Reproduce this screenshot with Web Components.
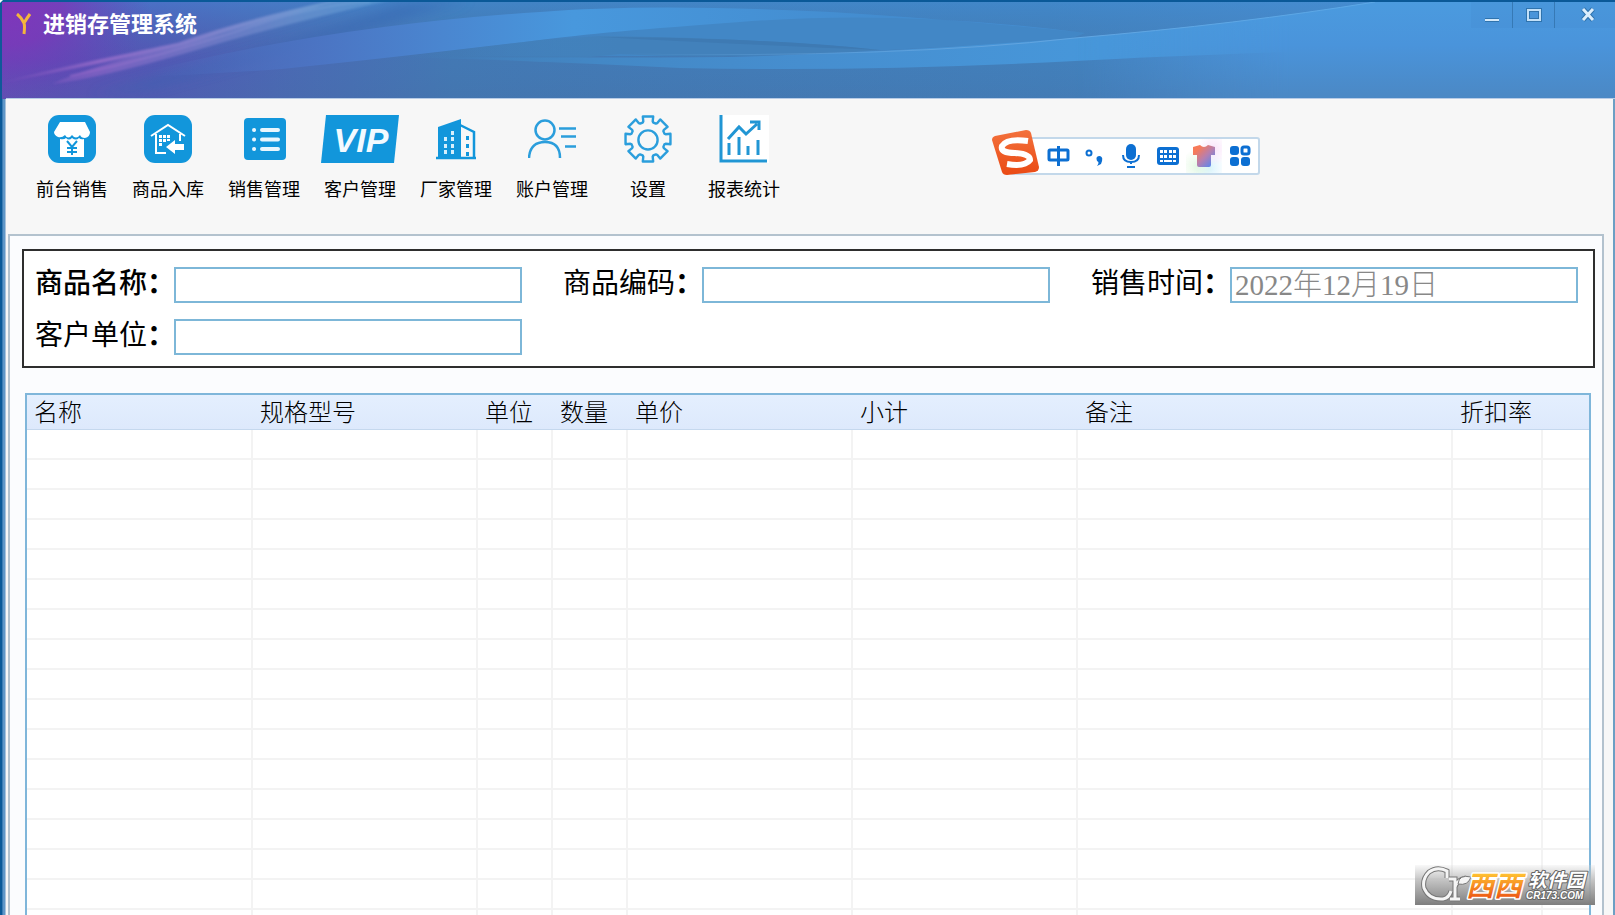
<!DOCTYPE html>
<html lang="zh-CN">
<head>
<meta charset="utf-8">
<title>进销存管理系统</title>
<style>
html,body{height:100%;margin:0}
body{font-family:"Liberation Sans","Noto Sans CJK SC",sans-serif;overflow:hidden;background:#f7f7f7}
</style>
</head>
<body>
<app-window>
  <title-bar slot="title">进销存管理系统</title-bar>
  <tool-bar slot="tools">
    <tool-item icon="shop">前台销售</tool-item>
    <tool-item icon="stock">商品入库</tool-item>
    <tool-item icon="list">销售管理</tool-item>
    <tool-item icon="vip">客户管理</tool-item>
    <tool-item icon="factory">厂家管理</tool-item>
    <tool-item icon="account">账户管理</tool-item>
    <tool-item icon="gear">设置</tool-item>
    <tool-item icon="chart">报表统计</tool-item>
  </tool-bar>
  <sale-form>
    <form-field label="商品名称" weight="500"></form-field>
    <form-field label="商品编码" weight="400"></form-field>
    <form-field label="销售时间" weight="400" value="2022年12月19日"></form-field>
    <form-field label="客户单位" weight="400"></form-field>
  </sale-form>
  <sale-table></sale-table>
  <ime-bar slot="overlay"></ime-bar>
  <site-mark slot="overlay"></site-mark>
</app-window>
<script>
const define = (name, html) => customElements.define(name, class extends HTMLElement {
  constructor(){
    super();
    this.attachShadow({mode:"open"}).innerHTML = typeof html === "function" ? html(this) : html;
  }
});

define("app-window", `
<style>
:host{display:flex;flex-direction:column;height:100vh;position:relative;overflow:hidden;box-sizing:border-box}
.frame{flex:1;min-height:0;display:flex;flex-direction:column;
 border-right:2px solid #6c9fc4;padding:0 9px 0 8px;
 background:linear-gradient(90deg,#0a5998 0 2px,#3b7cb4 2px 3px,#5f97c8 3px 5px,#a9c3dc 5px 6px,#f7f7f7 6px)}
.panel{flex:1;min-height:0;border:2px solid #b3c2ce;border-bottom:0;background:#fbfcfe;padding:13px 7px 0 12px;overflow:hidden}
</style>
<slot name="title"></slot>
<div class="frame"><slot name="tools"></slot><main class="panel"><slot></slot></main></div>
<slot name="overlay"></slot>`);

define("title-bar", `
<style>
:host{display:flex;flex:none;height:99px;position:relative;color:#fff;overflow:hidden}
.art{position:absolute;inset:0;width:100%;height:100%}
h1{position:relative;display:flex;align-items:flex-start;gap:11px;margin:0;padding:11px 0 0 16px;font-size:22px;line-height:28px;font-weight:700;flex:1}
h1 svg{margin-top:2px}
.buttons{position:relative;display:flex;height:28px;padding-top:2px;box-sizing:border-box}
button{width:42px;padding:0;border:0;border-right:1px solid #3679b5;background:#4189cb33;display:flex;justify-content:center;align-items:flex-start}
button:last-child{width:60px;border-right:0;padding-left:6px}
button svg{display:block;margin-top:3px}
</style>
<svg class="art" viewBox="0 0 1615 99" preserveAspectRatio="none" aria-hidden="true">
<defs>
<linearGradient id="base"><stop offset="0" stop-color="#6d41b8"/><stop offset=".035" stop-color="#6146b6"/><stop offset=".1" stop-color="#5355b5"/><stop offset=".18" stop-color="#4b68b4"/><stop offset=".28" stop-color="#4378b4"/><stop offset=".65" stop-color="#4280bc"/><stop offset=".8" stop-color="#4888c8"/><stop offset="1" stop-color="#4a8fd2"/></linearGradient>
<linearGradient id="down" x2="0" y2="1"><stop offset="0" stop-color="#4190d8" stop-opacity=".5"/><stop offset=".6" stop-color="#4278ae" stop-opacity=".1"/><stop offset="1" stop-color="#456fa4" stop-opacity=".3"/></linearGradient>
<radialGradient id="corner" gradientUnits="userSpaceOnUse" cx="0" cy="0" r="150" gradientTransform="matrix(1 0 0 .6 0 10)"><stop offset="0" stop-color="#8035bb"/><stop offset=".4" stop-color="#7a38b9" stop-opacity=".85"/><stop offset="1" stop-color="#6046b8" stop-opacity="0"/></radialGradient>
<linearGradient id="a" gradientUnits="userSpaceOnUse" x1="150" x2="880"><stop offset="0" stop-color="#4f6cc0" stop-opacity="0"/><stop offset=".22" stop-color="#4c74c4" stop-opacity=".9"/><stop offset=".4" stop-color="#4a86d0"/><stop offset=".58" stop-color="#4898dd"/><stop offset="1" stop-color="#438ccf"/></linearGradient>
<linearGradient id="c" gradientUnits="userSpaceOnUse" x1="400" x2="620"><stop offset="0" stop-color="#4281bb" stop-opacity="0"/><stop offset="1" stop-color="#4281bb"/></linearGradient>
<linearGradient id="lens" gradientUnits="userSpaceOnUse" x1="460" x2="640"><stop offset="0" stop-color="#4287c6" stop-opacity="0"/><stop offset="1" stop-color="#4287c6"/></linearGradient>
<linearGradient id="d" gradientUnits="userSpaceOnUse" x1="400" x2="1400"><stop offset="0" stop-color="#4382be" stop-opacity="0"/><stop offset=".2" stop-color="#4388c6"/><stop offset=".4" stop-color="#468ecf"/><stop offset=".7" stop-color="#4797da"/><stop offset="1" stop-color="#4b9add"/></linearGradient>
<linearGradient id="r" gradientUnits="userSpaceOnUse" x1="0" x2="0" y1="0" y2="99"><stop offset="0" stop-color="#4b9bdf"/><stop offset=".45" stop-color="#4a94db"/><stop offset="1" stop-color="#4b88c4"/></linearGradient>
<linearGradient id="fade" gradientUnits="userSpaceOnUse" x1="1075" x2="1290"><stop offset="0" stop-color="#fff" stop-opacity="0"/><stop offset="1" stop-color="#fff"/></linearGradient>
<mask id="m" maskUnits="userSpaceOnUse" x="1000" y="0" width="615" height="99"><rect x="1000" width="615" height="99" fill="url(#fade)"/></mask>
<linearGradient id="s" gradientUnits="userSpaceOnUse" x1="0" x2="390"><stop offset="0" stop-color="#8858bf" stop-opacity=".2"/><stop offset=".25" stop-color="#8c66c6"/><stop offset=".55" stop-color="#7b82cb"/><stop offset=".8" stop-color="#6d99d2"/><stop offset="1" stop-color="#5a9bd6"/></linearGradient>
<linearGradient id="l" gradientUnits="userSpaceOnUse" x1="620" x2="1375"><stop offset="0" stop-color="#68a5dc" stop-opacity="0"/><stop offset=".5" stop-color="#62a4df"/><stop offset="1" stop-color="#5ba7e6"/></linearGradient>
<filter id="b1"><feGaussianBlur stdDeviation="1"/></filter>
<filter id="b2"><feGaussianBlur stdDeviation="6"/></filter>
</defs>
<rect width="1615" height="99" fill="url(#base)"/><rect width="1615" height="99" fill="url(#down)"/>
<rect width="200" height="99" fill="url(#corner)"/>
<path d="M90 95Q280 50 400 5L470 0Q360 30 150 88Z" fill="#3565b0" opacity=".55" filter="url(#b2)"/>
<path d="M460 18Q650 3 830 12Q960 20 1085 33L1070 39Q900 51 740 56H460Z" fill="url(#lens)"/>
<path d="M120 78Q320 26 540 12Q650 3 830 12Q960 20 1085 33Q900 9 740 22Q600 32 540 40Q400 57 282 69Q200 75 120 78Z" fill="url(#a)"/>
<path d="M400 57L540 40L600 36Q760 38 880 50Q730 60 620 54L540 62Q460 56 400 57Z" fill="url(#c)"/>
<path d="M600 37Q770 38 880 50Q750 45 600 37Z" fill="#3e7ab3"/>
<path d="M400 57Q600 58 730 57Q900 52 1075 38Q1240 24 1375 2H1615V42Q1240 52 1075 61Q870 72 680 68Q540 61 400 57Z" fill="url(#d)"/>
<path d="M1000 38H1615V99H1000Z" fill="url(#r)" mask="url(#m)"/>
<path d="M1075 38Q1240 24 1375 2H1615V38Z" fill="url(#r)" mask="url(#m)"/>
<path d="M620 54Q900 58 1075 38Q1240 24 1375 2" fill="none" stroke="url(#l)"/>
<g filter="url(#b1)"><path d="M0 83Q48 70 120 55T180 42Q241 20 335 0H345Q260 21 185 45Q120 60 0 83Z" fill="url(#s)"/>
<path d="M52 84Q90 66 172 47Q250 28 345 0H392Q290 22 190 52Q100 78 52 84Z" fill="url(#s)" opacity=".65"/>
<path d="M70 76Q160 57 240 30T370 2" fill="none" stroke="url(#s)" stroke-width="2"/></g>
<path d="M0 1H1615" stroke="#0a5998" stroke-width="2"/><path d="M1 0V99" stroke="#0f5999" stroke-width="2"/><path d="M6 98.500H1615" stroke="#b8cce6"/>
<path d="M0 0H3L0 3Z" fill="#fff"/>
</svg>
<h1><svg width="16" height="22" viewBox="0 0 16 22" fill="none" stroke="#f4b63c" stroke-width="3"><path d="M1 1Q5 4 8 10Q9 13 8 21M14 1Q11 5 8 10"/></svg><slot></slot></h1>
<div class="buttons">
<button aria-label="最小化"><svg width="16" height="18" viewBox="0 0 16 18"><path d="M1 15H15" stroke="#2f73ad" stroke-width="4"/><path d="M1 15H15" stroke="#d3e9fa" stroke-width="2"/></svg></button>
<button aria-label="最大化"><svg width="18" height="18" viewBox="0 0 18 18" fill="none"><path d="M3 5H15V15H3Z" stroke="#2f73ad" stroke-width="4"/><path d="M3 5H15V15H3Z" stroke="#c2e0f8" stroke-width="2"/></svg></button>
<button aria-label="关闭"><svg width="18" height="18" viewBox="0 0 18 18" fill="none"><path d="M4 4L14 15M14 4L4 15" stroke="#2f73ad" stroke-width="5"/><path d="M4 4L14 15M14 4L4 15" stroke="#dceefc" stroke-width="3"/></svg></button>
</div>`);

define("tool-bar", `
<style>:host{display:flex;height:135px;padding:16px 0 0 16px;box-sizing:border-box;flex:none}</style><slot></slot>`);

const gearPath = (() => {
  let d = "";
  for (let i = 0; i < 8; i++) {
    const c = i * 45;
    [[-18,18],[-15,19],[-13,24],[13,24],[15,19],[18,18]].forEach(([a, r]) => {
      const t = (c + a - 90) * Math.PI / 180;
      d += (d ? "L" : "M") + (24 + r * Math.cos(t)).toFixed(1) + " " + (24 + r * Math.sin(t)).toFixed(1);
    });
  }
  return d + "Z";
})();
const icons = {
shop:`<svg width="48" height="48" viewBox="0 0 48 48"><rect width="48" height="48" rx="11" fill="#1296db"/><path d="M12 7H37L42 17Q42 22 37 23Q33 23 32 20Q28 25 24 20Q20 25 17 20Q14 23 10 22Q6 20 6 17Z" fill="#fff"/><path d="M12 24Q16 25 18 23Q21 26 24 23Q28 26 31 23Q33 25 36 24V42H12Z" fill="#fff"/><path d="M19 26L24 32L29 26M24 32V40M19 33H29M19 37H29" fill="none" stroke="#1296db" stroke-width="2"/></svg>`,
stock:`<svg width="48" height="48" viewBox="0 0 48 48"><rect width="48" height="48" rx="11" fill="#1296db"/><path d="M7 21L24 10L41 21M12 19V38H22M36 19V26" fill="none" stroke="#fff" stroke-width="2"/><path d="M15 20h3v3h-3zm4 0h3v3h-3zm4 0h3v3h-3zM15 24h3v3h-3zm4 0h3v3h-3zM15 28h3v3h-3zm8-4h3v2h-3zM22 32L31 25V29H40V35H31V39Z" fill="#fff"/></svg>`,
list:`<svg width="48" height="48" viewBox="0 0 48 48"><rect x="4" y="3" width="42" height="42" rx="4" fill="#1296db"/><g stroke="#e9f6fd" stroke-width="4" stroke-linecap="round"><path d="M14 15h.1M14 24.500h.1M14 34h.1M22 15H38M22 24.500H38M22 34H38"/></g></svg>`,
vip:`<svg width="78" height="48" viewBox="0 0 78 48"><path d="M5 0H78L73 48H0Z" fill="#1296db"/><text x="40" y="37" text-anchor="middle" font-family="Liberation Sans,sans-serif" font-size="34" font-weight="700" font-style="italic" fill="#f2faff">VIP</text></svg>`,
factory:`<svg width="48" height="48" viewBox="0 0 48 48"><path d="M6 12L29 4V43H6Z" fill="#1296db"/><path d="M28 10L42 17V42M4 43H44" fill="none" stroke="#1296db" stroke-width="2.500"/><path d="M12 22h3v4h-3zm7-6h3v4h-3zm0 6h3v4h-3zM12 29h3v4h-3zm7 0h3v4h-3zM12 35h3v4h-3zm7 0h3v4h-3z" fill="#d5effc"/><path d="M34 21h3v4h-3zm0 8h3v4h-3zm0 8h3v4h-3z" fill="#1296db"/></svg>`,
account:`<svg width="48" height="48" viewBox="0 0 48 48" fill="none" stroke="#2b9edc" stroke-width="2.500"><circle cx="17" cy="15" r="9.500"/><path d="M1 43Q2 27 17 27T32 43M31 13.500H48M33 21.500H48M37 31.500H48"/></svg>`,
gear:`<svg width="48" height="48" viewBox="-1 -1 50 50" fill="none" stroke="#2b9edc" stroke-width="2.500"><path d="${gearPath}" stroke-linejoin="round"/><circle cx="24" cy="25" r="10"/></svg>`,
chart:`<svg width="52" height="48" viewBox="0 0 52 48" fill="none" stroke="#2196d4" stroke-width="3"><path d="M2 0H51V48H2Z" fill="#fff" stroke="none"/><path d="M3 0V46H49"/><path d="M10 24L21 12L28 19L39 9M32 7H41V15"/><path d="M11 28V40M21 22V40M30 31V40M40 25V40"/></svg>`
};
define("tool-item", el => `
<style>
:host{display:block;width:96px}
button{display:flex;flex-direction:column;align-items:center;gap:14px;width:100%;padding:0;border:0;background:none;color:#000;font:18px/26px "Liberation Sans","Noto Sans CJK SC",sans-serif}
svg{display:block}
</style><button>${icons[el.getAttribute("icon")]}<span><slot></slot></span></button>`);

define("sale-form", `
<style>
:host{display:grid;grid-template-columns:repeat(3,minmax(0,1fr));gap:16px 41px;border:2px solid #2e2e2e;background:#fff;padding:16px 15px 11px 11px}
</style><slot></slot>`);

define("form-field", el => `
<style>
:host{display:flex}
label{flex:none;width:139px;font-size:28px;line-height:33px;color:#000;white-space:nowrap;font-weight:${el.getAttribute("weight")}}
b{font-weight:700}
input{flex:1;min-width:0;height:36px;box-sizing:border-box;border:2px solid #7db7d8;background:#fff;padding:0 0 6px 3px;margin:0;
 font:300 29px/26px "Liberation Serif","Noto Sans CJK SC",serif;color:#888;border-radius:0;outline:0}
</style><label for="f">${el.getAttribute("label")}<b>：</b></label><input id="f" type="text" value="${el.getAttribute("value") || ""}">`);

const columns = [["名称",226],["规格型号",225],["单位",75],["数量",75],["单价",225],["小计",225],["备注",375],["折扣率",90],["",0]];
define("sale-table", `
<style>
:host{display:block;margin:25px 4px 0 3px;border:2px solid #7fb6da;border-bottom:0;background:#fff}
table{border-collapse:separate;border-spacing:0;table-layout:fixed;width:100%}
col:first-child{width:227px}
th{height:35px;padding:1px 0 0 7px;box-sizing:border-box;text-align:left;font-size:24px;line-height:33px;font-weight:300;color:#000;background:linear-gradient(#e4effe,#dde9fc);border-bottom:1px solid #c5d8ee;white-space:nowrap}
td{height:30px;padding:0;box-sizing:border-box;border-right:2px solid #f3f3f3;border-bottom:2px solid #f3f3f3}
td:last-child{border-right:0}
</style>
<table><colgroup>${columns.map(c => `<col${c[1] ? ` style="width:${c[1]}px"` : ""}>`).join("")}</colgroup>
<thead><tr>${columns.map(c => `<th scope="col">${c[0]}</th>`).join("")}</tr></thead>
<tbody>${("<tr>" + "<td></td>".repeat(9) + "</tr>").repeat(17)}</tbody></table>`);

define("ime-bar", `
<style>
:host{position:absolute;left:992px;top:130px;display:flex;align-items:flex-start;height:46px}
.logo{position:relative;z-index:1}
.bar{display:flex;align-items:center;height:38px;margin:7px 0 0 -30px;padding:0 0 0 29px;width:250px;box-sizing:border-box;border:2px solid #c3d8ea;background:#fff;border-radius:3px}
button{flex:1;height:34px;border:0;background:none;padding:0;display:grid;place-items:center}
button:nth-child(5){background:radial-gradient(circle at 75% 30%,#f6d5f7aa,transparent 45%),radial-gradient(circle at 30% 80%,#d9f6d8aa,transparent 45%),radial-gradient(circle at 65% 85%,#c7eefcaa,transparent 45%)}
</style>
<svg class="logo" width="48" height="46" viewBox="0 0 48 46"><defs><linearGradient id="o" x2="0" y2="1"><stop stop-color="#f3713c"/><stop offset="1" stop-color="#ea4a14"/></linearGradient></defs><path d="M3 6L34 0Q38 0 39 3L47 37Q47 41 43 42L15 45Q11 45 10 42L0 10Q0 7 3 6Z" fill="url(#o)"/><path d="M36 11Q15 8 10 16Q8 23 23 23Q38 24 38 30Q33 37 15 34" fill="none" stroke="#fff" stroke-width="6"/></svg>
<div class="bar">
<button aria-label="中文"><svg width="24" height="24" viewBox="0 0 24 24" fill="none" stroke="#0c6fd2" stroke-width="3"><rect x="2" y="6" width="19" height="10" rx="1"/><path d="M11.500 2V22"/></svg></button>
<button aria-label="标点"><svg width="24" height="24" viewBox="0 0 24 24"><circle cx="6" cy="9" r="2.500" fill="none" stroke="#0c6fd2" stroke-width="2"/><path d="M17 12Q21 13 18 20L14 22Q17 18 14 17Q12 12 17 12Z" fill="#0c6fd2"/></svg></button>
<button aria-label="语音"><svg width="24" height="26" viewBox="0 0 24 26"><rect x="7" y="1" width="10" height="16" rx="5" fill="#0c6fd2"/><path d="M4 12Q4 19 12 19T20 12M12 19V21M8 24H16" fill="none" stroke="#0c6fd2" stroke-width="2"/></svg></button>
<button aria-label="键盘"><svg width="24" height="20" viewBox="0 0 24 20"><rect x="1" y="1" width="22" height="18" rx="3" fill="#0c6fd2"/><path d="M4 4h3v3h-3zm4 0h3v3h-3zm5 0h3v3h-3zm4 0h3v3h-3zM4 9h3v3h-3zm4 0h3v3h-3zm5 0h3v3h-3zm4 0h3v3h-3zM4 14h3v2h-3zm4 0h8v2h-8zm9 0h3v2h-3z" fill="#fff"/></svg></button>
<button aria-label="皮肤"><svg width="24" height="24" viewBox="0 0 24 24"><defs><linearGradient id="t" x2="1" y2="1"><stop offset=".2" stop-color="#f77a59"/><stop offset=".55" stop-color="#b57fb1"/><stop offset=".9" stop-color="#5a86ed"/></linearGradient></defs><path d="M1 3L8 1Q12 5 16 1L23 3V11H19V21Q19 23 17 23H7Q5 23 5 21V11H1Z" fill="url(#t)"/></svg></button>
<button aria-label="工具"><svg width="22" height="22" viewBox="0 0 22 22" fill="#0c6fd2"><rect x="1" y="1" width="9" height="9" rx="3"/><rect x="1" y="12" width="9" height="9" rx="3"/><rect x="12" y="12" width="9" height="9" rx="3"/><rect x="13" y="2" width="7" height="7" rx="2" fill="none" stroke="#0c6fd2" stroke-width="3"/></svg></button>
</div>`);

define("site-mark", `
<style>
:host{position:absolute;right:20px;bottom:10px;width:180px;height:40px;background:linear-gradient(#dededf33,#b7b7b7dd 40%,#7e7e7e)}
svg{display:block}
text{font-family:"Liberation Sans","Noto Sans CJK SC",sans-serif;font-weight:700;font-style:italic;paint-order:stroke;stroke-linejoin:round}
</style>
<svg width="180" height="40" viewBox="0 0 180 40"><defs><linearGradient id="g" x2="0" y2="1"><stop offset=".1" stop-color="#ffc032"/><stop offset="1" stop-color="#e9450e"/></linearGradient></defs>
<g fill="none"><path d="M32 13V6Q22 1 14 7Q7 14 9 23Q14 35 28 34Q34 33 36 26M34 14H40V34M35 34H45M40 22Q42 15 51 13" stroke="#777" stroke-width="5"/><path d="M32 13V6Q22 1 14 7Q7 14 9 23Q14 35 28 34Q34 33 36 26M34 14H40V34M35 34H45M40 22Q42 15 51 13" stroke="#f5f5f5" stroke-width="3"/></g><path d="M43 19Q44 9 56 12Q53 21 43 19Z" fill="#f5f5f5" stroke="#777"/>
<text x="51" y="31" font-size="28" fill="url(#g)" stroke="#fff" stroke-width="3">西西</text>
<text x="113" y="22" font-size="19" fill="#fff" stroke="#666" stroke-width="2">软件园</text>
<text x="111" y="34" font-size="10" fill="#fff" stroke="#666" stroke-width="2">CR173.COM</text></svg>`);
</script>
</body>
</html>
